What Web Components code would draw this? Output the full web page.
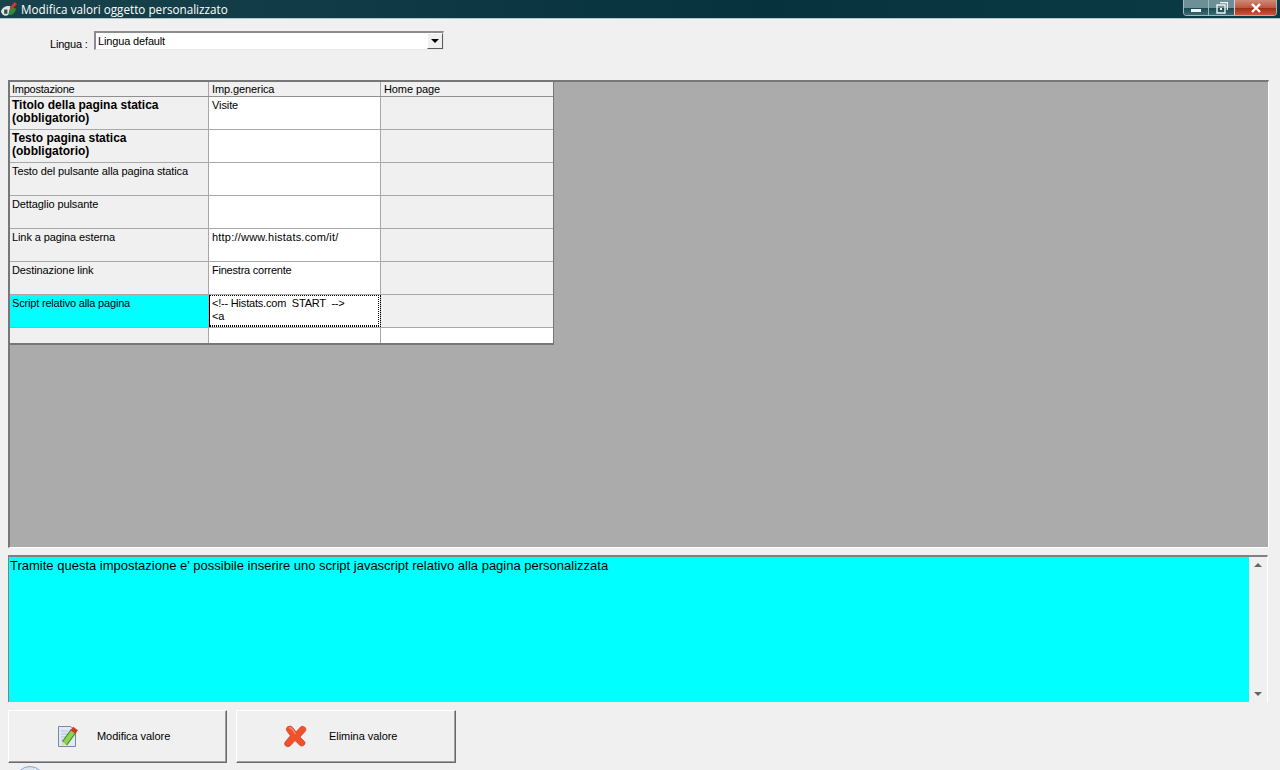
<!DOCTYPE html>
<html lang="it">
<head>
<meta charset="utf-8">
<title>Modifica valori oggetto personalizzato</title>
<style>
  html, body { margin: 0; height: 770px; overflow: hidden; background: #f0f0f0; }
  body { font: 11px "Liberation Sans", Arial, sans-serif; color: #000; }
  #page { display: flex; flex-direction: column; height: 770px; position: relative; overflow: hidden; }
</style>
</head>
<body>
<div id="page">
  <win-titlebar>Modifica valori oggetto personalizzato</win-titlebar>
  <lang-select label="Lingua :" value="Lingua default"></lang-select>
  <value-grid>
    <grid-row kind="head"><grid-cell kind="head" style="letter-spacing:-.25px">Impostazione</grid-cell><grid-cell kind="head">Imp.generica</grid-cell><grid-cell kind="head">Home page</grid-cell></grid-row>
    <grid-row><grid-cell kind="label" bold>Titolo della pagina statica (obbligatorio)</grid-cell><grid-cell>Visite</grid-cell><grid-cell kind="off"></grid-cell></grid-row>
    <grid-row><grid-cell kind="label" bold>Testo pagina statica (obbligatorio)</grid-cell><grid-cell></grid-cell><grid-cell kind="off"></grid-cell></grid-row>
    <grid-row><grid-cell kind="label">Testo del pulsante alla pagina statica</grid-cell><grid-cell></grid-cell><grid-cell kind="off"></grid-cell></grid-row>
    <grid-row><grid-cell kind="label">Dettaglio pulsante</grid-cell><grid-cell></grid-cell><grid-cell kind="off"></grid-cell></grid-row>
    <grid-row><grid-cell kind="label">Link a pagina esterna</grid-cell><grid-cell style="letter-spacing:.21px">http://www.histats.com/it/</grid-cell><grid-cell kind="off"></grid-cell></grid-row>
    <grid-row><grid-cell kind="label">Destinazione link</grid-cell><grid-cell style="letter-spacing:-.22px">Finestra corrente</grid-cell><grid-cell kind="off"></grid-cell></grid-row>
    <grid-row><grid-cell kind="active" style="letter-spacing:-.18px">Script relativo alla pagina</grid-cell><grid-cell kind="focus" style="letter-spacing:-.2px">&lt;!-- Histats.com  START  --&gt;<br>&lt;a</grid-cell><grid-cell kind="off"></grid-cell></grid-row>
    <grid-row kind="last"><grid-cell kind="label"></grid-cell><grid-cell></grid-cell><grid-cell></grid-cell></grid-row>
  </value-grid>
  <desc-box>Tramite questa impostazione e' possibile inserire uno script javascript relativo alla pagina personalizzata</desc-box>
  <div style="display:flex;gap:9px;margin:8px 0 0 8px">
    <action-button icon="edit" w="219" pad="49" gap="17">Modifica valore</action-button>
    <action-button icon="del" w="220" pad="46" gap="22">Elimina valore</action-button>
  </div>
  <div style="position:absolute;left:15px;top:766px;width:30px;height:30px;box-sizing:border-box;border-radius:50%;border:1px solid #8ea6c4;background:#dbe6f2"></div>
</div>

<script>
// barra del titolo della finestra
class WinTitlebar extends HTMLElement {
  constructor() {
    super();
    this.attachShadow({ mode: 'open' });
    this.shadowRoot.innerHTML = `
      <style>
        :host { display: flex; align-items: flex-start; height: 19px; box-sizing: border-box; border-bottom: 1px solid #b4c6c8;
          background: linear-gradient(90deg, #18424c 0, #0f3a45 30%, #06323d 60%, #0b3b46 100%); color: #fff; }
        .logo { margin: 2px 0 0 1px; width: 17px; height: 15px; flex: none; }
        .txt { margin: 1px 0 0 3px; font: 11.7px/17px "Open Sans", sans-serif; flex: 1; white-space: nowrap; }
        .ctl { display: flex; margin-right: 3px; height: 16px; box-sizing: border-box; border: 1px solid #9fb8bd; border-top: 0; border-radius: 0 0 4px 4px; overflow: hidden; }
        .ctl span { display: flex; align-items: center; justify-content: center; height: 15px; box-sizing: border-box; }
        .min { width: 25px; background: linear-gradient(#6f8f96 0, #6f8f96 50%, #1c4a54 55%, #3c6a72 100%); border-right: 1px solid #9fb8bd; }
        .max { width: 25px; background: linear-gradient(#6f8f96 0, #6f8f96 50%, #1c4a54 55%, #3c6a72 100%); }
        .cls { width: 42px; background: linear-gradient(#cf8a76 0, #bb5a43 50%, #a42c12 55%, #c9573c 100%); border-left: 1px solid #c9d8da; }
      </style>
      <svg class="logo" viewBox="0 0 16 14">
        <path d="M0 9c1-4 5-6 9-5l-2 8c-3 2-6 0-7-3z" fill="#dfe3df"/>
        <path d="M7 12l2-8 5 2c0 3-3 7-7 6z" fill="#2f8a3c"/>
        <path d="M8 5l5-5 2 2-5 5z" fill="#d8352a"/>
        <path d="M3 7h3v4H3z" fill="#3a4a4c"/>
      </svg>
      <div class="txt"><slot></slot></div>
      <div class="ctl">
        <span class="min"><svg width="12" height="10"><rect x="1" y="6" width="10" height="3" fill="#eef4f4"/></svg></span>
        <span class="max"><svg width="12" height="12"><path d="M4 .5h7.500v7.500M1 3h8v8H1z" fill="none" stroke="#eef4f4" stroke-width="1.400"/><rect x="4" y="6" width="2" height="2" fill="#eef4f4"/></svg></span>
        <span class="cls"><svg width="12" height="10"><path d="M2 1l8 8M10 1l-8 8" stroke="#fff" stroke-width="2.400"/></svg></span>
      </div>`;
  }
}

// combo della lingua
class LangSelect extends HTMLElement {
  constructor() {
    super();
    this.attachShadow({ mode: 'open' });
  }
  connectedCallback() {
    this.shadowRoot.innerHTML = `
      <style>
        :host { display: flex; align-items: flex-start; height: 61px; padding: 12px 0 0 50px; box-sizing: border-box; }
        label { width: 44px; padding-top: 7px; line-height: 13px; letter-spacing: -.2px; }
        .box { display: flex; width: 350px; height: 19px; box-sizing: border-box; background: #fff; border-style: solid; border-width: 2px 1px 1px 2px; border-color: #8c8c8c #e8e8e8 #e8e8e8 #8c8c8c; }
        .val { flex: 1; padding: 2px 0 0 2px; line-height: 13px; letter-spacing: -.15px; }
        .btn { width: 16px; height: 16px; box-sizing: border-box; background: #f0f0f0; border: 1px solid; border-color: #fff #5a5a5a #5a5a5a #fff; display: flex; align-items: center; justify-content: center; }
        .btn i { border: 4px solid transparent; border-top: 4px solid #000; border-bottom: 0; }
      </style>
      <label>${this.getAttribute('label')}</label>
      <div class="box"><div class="val">${this.getAttribute('value')}</div><div class="btn"><i></i></div></div>`;
  }
}

// griglia dei valori: sfondo grigio con le righe in alto a sinistra
class ValueGrid extends HTMLElement {
  constructor() {
    super();
    this.attachShadow({ mode: 'open' });
    this.shadowRoot.innerHTML = `
      <style>
        :host { display: block; margin: 0 11px 0 8px; height: 468px; box-sizing: border-box; background: #ababab; border-style: solid; border-width: 2px 1px 1px 2px; border-color: #777 #fff #fff #777; }
        .tbl { width: 544px; box-sizing: border-box; background: #fff; border-right: 1px solid #777; border-bottom: 2px solid #777; }
      </style>
      <div class="tbl"><slot></slot></div>`;
  }
}

class GridRow extends HTMLElement {
  constructor() {
    super();
    this.attachShadow({ mode: 'open' });
    this.shadowRoot.innerHTML = `
      <style>
        :host { display: grid; grid-template-columns: 199px 172px 172px; height: 33px; box-sizing: border-box; border-bottom: 1px solid #a8a8a8; }
        :host([kind="head"]) { height: 15px; border-bottom: 1px solid #909090; }
        :host([kind="last"]) { height: 15px; border-bottom: 0; }
      </style>
      <slot></slot>`;
  }
}

class GridCell extends HTMLElement {
  constructor() {
    super();
    this.attachShadow({ mode: 'open' });
    this.shadowRoot.innerHTML = `
      <style>
        :host { display: block; position: relative; box-sizing: border-box; padding: 2px 3px 0 3px; line-height: 13px; border-right: 1px solid #a8a8a8; background: #fff; overflow: hidden; letter-spacing: -.1px; }
        :host(:first-child) { padding-left: 2px; }
        :host(:last-child) { border-right: 0; }
        :host([kind="head"]) { background: #f0f0f0; padding-top: 1px; }
        :host([kind="label"]), :host([kind="off"]) { background: #f0f0f0; }
        :host([kind="active"]) { background: #0ff; }
        :host([bold]) { font: bold 12px/13px "Liberation Sans", sans-serif; padding-top: 2px; letter-spacing: 0; padding-right: 30px; }
        :host([kind="focus"]) { outline: 1px dotted #000; outline-offset: -1px; padding-top: 2px; }
        :host([kind="focus"])::after { content: ""; position: absolute; inset: 1px; outline: 1px dotted #000; outline-offset: 0; margin: 0 1px 1px 0; }
        :host([kind="focus"]) slot { white-space: pre; }
      </style><slot></slot>`;
  }
}

// riquadro descrizione con barra di scorrimento
class DescBox extends HTMLElement {
  constructor() {
    super();
    this.attachShadow({ mode: 'open' });
    this.shadowRoot.innerHTML = `
      <style>
        :host { display: flex; margin: 7px 12px 0 8px; height: 147px; box-sizing: border-box; border-top: 2px solid #808080; border-left: 1px solid #808080; border-right: 1px solid #fff; background: #0ff; }
        .txt { flex: 1; padding: 1px 0 0 1px; font-size: 13px; line-height: 15px; }
        .bar { width: 18px; background: #f0f0f0; display: flex; flex-direction: column; justify-content: space-between; align-items: center; padding: 6px 0 6px; box-sizing: border-box; }
        .up { border: 4px solid transparent; border-bottom: 4px solid #666; border-top: 0; }
        .dn { border: 4px solid transparent; border-top: 4px solid #666; border-bottom: 0; }
      </style>
      <div class="txt"><slot></slot></div>
      <div class="bar"><i class="up"></i><i class="dn"></i></div>`;
  }
}

// pulsante con icona
const ICONS = {
  edit: `<svg width="22" height="23" viewBox="0 0 22 23">
    <path d="M.5 2.500h12l5 4v16H.5z" fill="#e2e9f4" stroke="#7488ad"/>
    <path d="M3 7h7M3 10h10M3 13h6M3 16h4" stroke="#b3c0d6"/>
    <path d="M6.500 19.500l9-12.500" stroke="#3f8f2a" stroke-width="6.500"/>
    <path d="M6.500 19.500l9-12.500" stroke="#8ed24f" stroke-width="4.500"/>
    <path d="M15 8l2.500-3.500" stroke="#d8342e" stroke-width="6"/>
    <path d="M3.600 22l.4-4.600 4.200 3z" fill="#e9d8b0"/>
  </svg>`,
  del: `<svg width="24" height="24" viewBox="0 0 24 24">
    <path d="M6 2.500c1.500-1 3 0 4 1.500l3 4 4.500-5c1.500-1.500 4-.5 5 1 .8 1.200.3 2.500-.5 3.500l-5 5.500 4.500 4.500c1 1.500.5 3-1 4-1.500.8-3 .5-4-.5l-4.500-4.500-4.500 5c-1.500 1.500-3.500 1.500-5 .3-1.200-1-1.200-2.800-.2-4l5-6-3.500-5c-1-1.500-.5-3.200 1.200-4.300z" fill="#f0512d" stroke="#d23c1c" stroke-width=".7"/>
    <path d="M6 4c1.200-.8 2.400 0 3 1l3.500 5" stroke="#ff9a78" stroke-width="1.200" fill="none"/>
  </svg>`
};

class ActionButton extends HTMLElement {
  constructor() {
    super();
    this.attachShadow({ mode: 'open' });
  }
  connectedCallback() {
    const w = this.getAttribute('w');
    this.shadowRoot.innerHTML = `
      <style>
        :host { display: flex; align-items: center; width: ${w}px; height: 53px; box-sizing: border-box; padding-left: ${this.getAttribute('pad')}px; gap: ${this.getAttribute('gap')}px; background: #f0f0f0; border: 1px solid; border-color: #fff #696969 #696969 #fff; box-shadow: inset -1px -1px 0 #a0a0a0; }
        svg { display: block; flex: none; margin-top: -2px; }
        span { margin-top: -2px; letter-spacing: -.05px; }
      </style>
      ${ICONS[this.getAttribute('icon')]}
      <span><slot></slot></span>`;
  }
}

customElements.define('win-titlebar', WinTitlebar);
customElements.define('lang-select', LangSelect);
customElements.define('value-grid', ValueGrid);
customElements.define('grid-row', GridRow);
customElements.define('grid-cell', GridCell);
customElements.define('desc-box', DescBox);
customElements.define('action-button', ActionButton);
</script>
</body>
</html>
